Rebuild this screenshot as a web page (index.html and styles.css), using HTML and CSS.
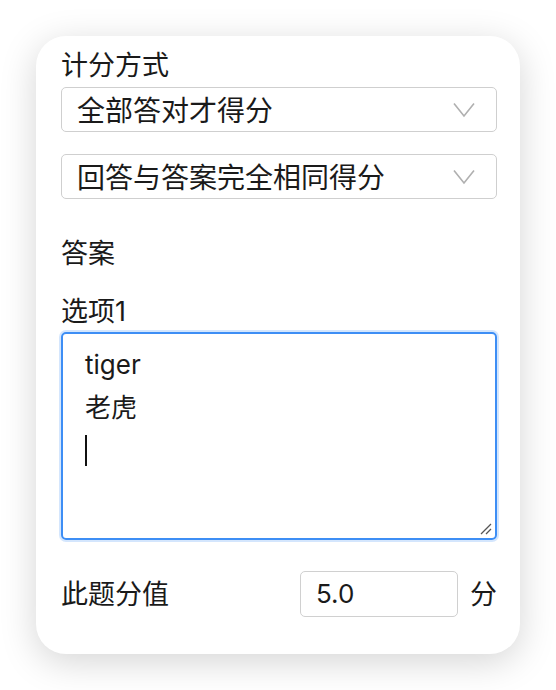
FILE: index.html
```html
<!DOCTYPE html>
<html lang="zh">
<head>
<meta charset="utf-8">
<link rel="stylesheet" href="styles.css">
</head>
<body>
<div class="page">
  <div class="card">
    <div class="label">计分方式</div>
    <div class="select">
      <span class="select-text">全部答对才得分</span>
      <svg class="chevron" width="22" height="16" viewBox="0 0 22 16"><path d="M1 1.5 L11 14 L21 1.5" fill="none" stroke="#b0b0b0" stroke-width="1.6"/></svg>
    </div>
    <div class="select second">
      <span class="select-text">回答与答案完全相同得分</span>
      <svg class="chevron" width="22" height="16" viewBox="0 0 22 16"><path d="M1 1.5 L11 14 L21 1.5" fill="none" stroke="#b0b0b0" stroke-width="1.6"/></svg>
    </div>
    <div class="label section">答案</div>
    <div class="label option">选项1</div>
    <div class="textarea">
      <div class="line">tiger</div>
      <div class="line">老虎</div>
      <div class="line"><span class="caret"></span></div>
      <svg class="grip" width="14" height="14" viewBox="0 0 14 14"><path d="M13 3 L3 13 M13 8 L8 13" stroke="#555" stroke-width="1.3" fill="none"/></svg>
    </div>
    <div class="score-row">
      <span class="score-label">此题分值</span>
      <div class="score-right">
        <div class="score-input">5.0</div>
        <span class="unit">分</span>
      </div>
    </div>
  </div>
</div>
</body>
</html>
```
FILE: styles.css
```css
* { box-sizing: border-box; }
html, body { margin: 0; padding: 0; background: #ffffff; }
body {
  font-family: "Inter", "Noto Sans CJK SC", sans-serif;
  color: #1a1a1a;
  width: 556px;
  height: 690px;
  overflow: hidden;
}
.page { padding: 36px; }
.card {
  width: 484px;
  height: 618px;
  background: #ffffff;
  border-radius: 30px;
  box-shadow: 0 8px 36px rgba(0, 0, 0, 0.17);
  padding: 10px 23px 37px 25px;
  display: flex;
  flex-direction: column;
}
.label {
  font-size: 27px;
  line-height: 36px;
  height: 36px;
  padding-top: 2px;
}
.select {
  margin-top: 5px;
  height: 45px;
  border: 1.5px solid #cfcfcf;
  border-radius: 5px;
  display: flex;
  align-items: center;
  justify-content: space-between;
  padding: 0 21px 0 15px;
}
.select.second { margin-top: 22px; }
.select-text { font-size: 28px; line-height: 36px; color: #1a1a1a; padding-top: 2px; }
.chevron { display: block; margin-top: 1px; }
.section { margin-top: 35px; }
.option { margin-top: 22px; }
.textarea {
  position: relative;
  margin-top: 4px;
  height: 208px;
  border: 2px solid #3d8ef5;
  border-radius: 5px;
  box-shadow: 0 0 0 2px rgba(61, 142, 245, 0.22);
  padding: 9px 22px;
}
.line {
  font-size: 26px;
  line-height: 43px;
  height: 43px;
  display: flex;
  align-items: center;
}
.caret {
  display: block;
  width: 2px;
  height: 31px;
  background: #111;
}
.grip {
  position: absolute;
  right: 3px;
  bottom: 3px;
}
.score-row {
  margin-top: 31px;
  height: 46px;
  display: flex;
  align-items: center;
  justify-content: space-between;
}
.score-label { font-size: 27px; line-height: 36px; padding-top: 2px; }
.score-right { display: flex; align-items: center; }
.score-input {
  width: 158px;
  height: 46px;
  border: 1.5px solid #d0d0d0;
  border-radius: 5px;
  padding-left: 15px;
  font-size: 26px;
  line-height: 43px;
}
.unit { font-size: 27px; line-height: 36px; margin-left: 12px; padding-top: 2px; }
```
